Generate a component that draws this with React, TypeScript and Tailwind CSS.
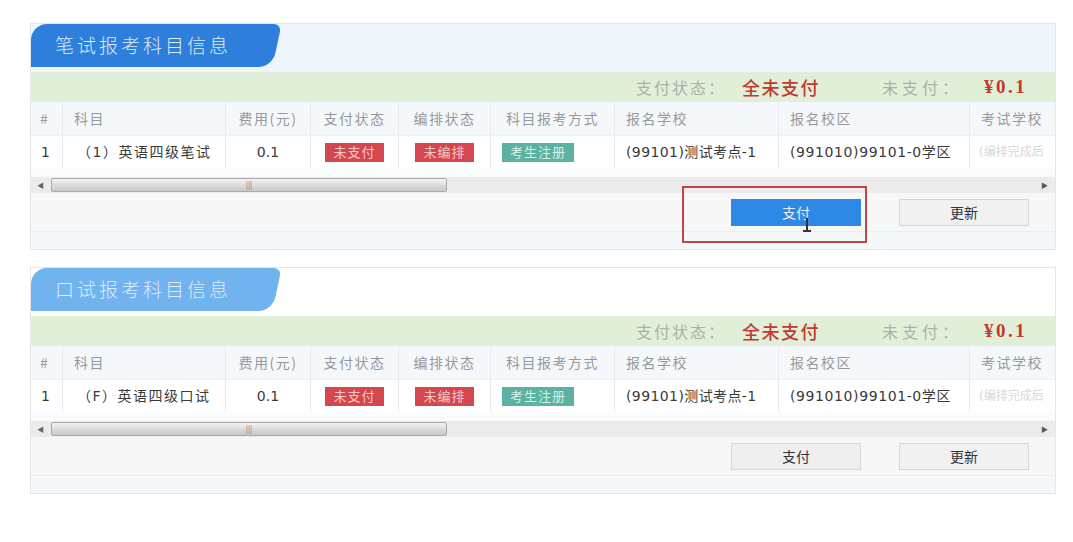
import React from "react";

const cjk = "font-['Noto_Sans_CJK_SC',sans-serif]";
const num = "font-['DejaVu_Sans','Noto_Sans_CJK_SC',sans-serif]";

type Col = { label: string; w: string; center?: boolean };

const cols: Col[] = [
  { label: "#", w: "w-[32px]" },
  { label: "科目", w: "w-[163px]" },
  { label: "费用(元)", w: "w-[85px]", center: true },
  { label: "支付状态", w: "w-[88px]", center: true },
  { label: "编排状态", w: "w-[92px]", center: true },
  { label: "科目报考方式", w: "w-[124px]", center: true },
  { label: "报名学校", w: "w-[164px]" },
  { label: "报名校区", w: "w-[191px]" },
  { label: "考试学校", w: "w-[86px]" },
];

function Badge({ text, teal }: { text: string; teal?: boolean }) {
  return (
    <span
      className={`inline-block h-[19px] px-[8px] text-[13px] leading-[19px] tracking-[1px] ${
        teal ? "bg-[#5bb2a2] text-[#d7efe9]" : "bg-[#d4474f] text-[#f6c7c7]"
      }`}
    >
      {text}
    </span>
  );
}

function Panel({
  title,
  subject,
  active,
}: {
  title: string;
  subject: string;
  active?: boolean;
}) {
  return (
    <div className={`ml-[30px] w-[1026px] border border-[#e3e7eb] ${cjk}`}>
      {/* tab band */}
      <div className={`h-[48px] ${active ? "bg-[#eef5fb]" : "bg-white"}`}>
        <div className="relative h-[43px] w-[252px]">
          <div
            className={`absolute inset-y-0 left-0 w-[225px] rounded-tl-[16px] ${
              active ? "bg-[#2e7fdc]" : "bg-[#70b3ef]"
            }`}
          />
          <div
            className={`absolute inset-y-0 left-[200px] w-[46px] -skew-x-12 rounded-tr-[8px] rounded-br-[14px] ${
              active ? "bg-[#2e7fdc]" : "bg-[#70b3ef]"
            }`}
          />
          <div className="relative flex h-full items-center pl-[24px] text-[19px] font-light tracking-[3px] text-[#dfeafa]">
            {title}
          </div>
        </div>
      </div>

      {/* summary bar */}
      <div className="flex h-[30px] items-center bg-[#e1efd8] pl-[605px]">
        <span className="text-[16px] tracking-[2px] text-[#aab1a9]">支付状态：</span>
        <span className="ml-[16px] text-[18px] font-medium tracking-[1.5px] text-[#c23a30]">全未支付</span>
        <span className="ml-[62px] text-[16px] tracking-[4px] text-[#aab1a9]">未支付：</span>
        <span className="ml-[22px] font-['Liberation_Serif',serif] text-[19px] font-bold tracking-[2.5px] text-[#c23a30]">
          ¥0.1
        </span>
      </div>

      {/* table */}
      <div className="overflow-hidden">
        <div className="flex h-[33px] bg-[#f5f8fa] text-[14px] tracking-[1.5px] text-[#959a9e]">
          {cols.map((c, i) => (
            <div
              key={c.label}
              className={`flex shrink-0 items-center border-r border-[#e6eaee] last:border-r-0 ${c.w} ${
                c.center ? "justify-center" : i === 0 ? "pl-[9px]" : "pl-[11px]"
              }`}
            >
              {c.label}
            </div>
          ))}
        </div>
        <div className={`flex h-[33px] border-t border-[#eef1f3] bg-white text-[14px] text-[#3a3a3a] ${num}`}>
          <div className="flex w-[32px] shrink-0 items-center border-r border-[#e6eaee] pl-[10px]">1</div>
          <div className="flex w-[163px] shrink-0 items-center border-r border-[#e6eaee] pl-[14px] tracking-[1.5px]">
            {subject}
          </div>
          <div className="flex w-[85px] shrink-0 items-center justify-center border-r border-[#e6eaee]">0.1</div>
          <div className="flex w-[88px] shrink-0 items-center justify-center border-r border-[#e6eaee]">
            <Badge text="未支付" />
          </div>
          <div className="flex w-[92px] shrink-0 items-center justify-center border-r border-[#e6eaee]">
            <Badge text="未编排" />
          </div>
          <div className="flex w-[124px] shrink-0 items-center border-r border-[#e6eaee] pl-[11px]">
            <Badge text="考生注册" teal />
          </div>
          <div className="flex w-[164px] shrink-0 items-center border-r border-[#e6eaee] pl-[11px] tracking-[0.4px]">
            (99101)测试考点-1
          </div>
          <div className="flex w-[191px] shrink-0 items-center border-r border-[#e6eaee] pl-[11px] tracking-[0.6px]">
            (991010)99101-0学区
          </div>
          <div className="flex w-[86px] shrink-0 items-center whitespace-nowrap pl-[9px] text-[12px] text-[#d5d8db]">
            (编排完成后
          </div>
        </div>
      </div>

      <div className="h-[9px] bg-[#fafbfc]" />

      {/* scrollbar */}
      <div className="flex h-[16px] items-center bg-[#ebebeb]">
        <span className="w-[20px] pl-[6px] text-[7px] text-[#666]">◀</span>
        <div className="flex h-[14px] w-[396px] items-center justify-center rounded-[2px] border border-[#a9a9a9] bg-gradient-to-b from-[#f4f4f4] via-[#dcdcdc] to-[#c8c8c8]">
          <span className="text-[8px] leading-none text-[#777]">|||</span>
        </div>
        <div className="flex-1" />
        <span className="w-[14px] text-[7px] text-[#555]">▶</span>
      </div>

      {/* buttons */}
      <div className="flex h-[38px] items-center bg-[#f7f7f7] pl-[700px]">
        <div className="relative">
          <button
            className={`h-[27px] w-[130px] text-[14px] ${
              active
                ? "bg-[#2e89e6] text-[#e4f0fc]"
                : "border border-[#d6d6d6] bg-[#efefef] text-[#333]"
            }`}
          >
            支付
          </button>
          {active && (
            <>
              <div className="pointer-events-none absolute left-[-49px] top-[-13px] h-[57px] w-[185px] border-2 border-[#b9474a]" />
              <div className="absolute left-[72px] top-[19px] h-[14px] w-[8px]">
                <div className="absolute left-[3px] top-0 h-full w-[1.5px] bg-[#333]" />
                <div className="absolute bottom-0 left-0 h-[1.5px] w-full bg-[#333]" />
              </div>
            </>
          )}
        </div>
        <button className="ml-[38px] h-[27px] w-[130px] border border-[#d6d6d6] bg-[#f1f1f1] text-[14px] text-[#333]">
          更新
        </button>
      </div>
      <div className="h-[18px] border-t border-[#eaeef2] bg-[#f5f8fb]" />
    </div>
  );
}

export default function App() {
  return (
    <div className="h-[542px] w-[1073px] overflow-hidden bg-white pt-[23px]">
      <Panel title="笔试报考科目信息" subject="（1）英语四级笔试" active />
      <div className="h-[17px]" />
      <Panel title="口试报考科目信息" subject="（F）英语四级口试" />
    </div>
  );
}
